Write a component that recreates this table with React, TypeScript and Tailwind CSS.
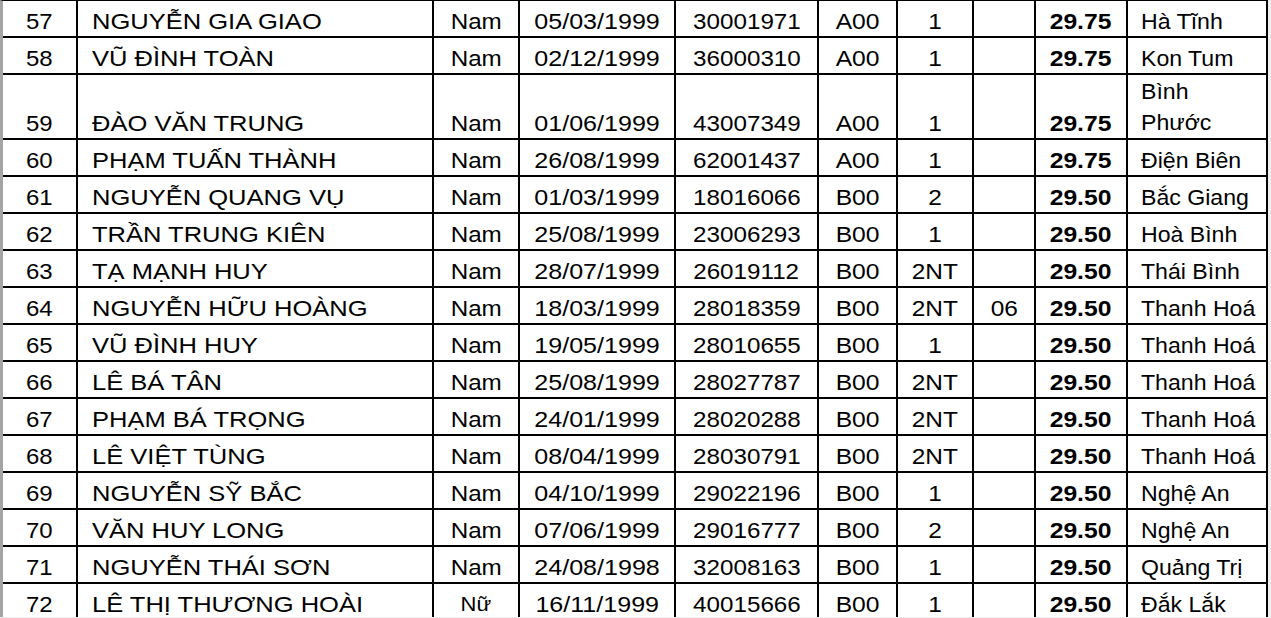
import React from "react";

type Row = {
  stt: string;
  name: string;
  gender: string;
  dob: string;
  sbd: string;
  khoi: string;
  kv: string;
  ut: string;
  score: string;
  place: string[];
};

const rows: Row[] = [
  { stt: "57", name: "NGUYỄN GIA GIAO", gender: "Nam", dob: "05/03/1999", sbd: "30001971", khoi: "A00", kv: "1", ut: "", score: "29.75", place: ["Hà Tĩnh"] },
  { stt: "58", name: "VŨ ĐÌNH TOÀN", gender: "Nam", dob: "02/12/1999", sbd: "36000310", khoi: "A00", kv: "1", ut: "", score: "29.75", place: ["Kon Tum"] },
  { stt: "59", name: "ĐÀO VĂN TRUNG", gender: "Nam", dob: "01/06/1999", sbd: "43007349", khoi: "A00", kv: "1", ut: "", score: "29.75", place: ["Bình", "Phước"] },
  { stt: "60", name: "PHẠM TUẤN THÀNH", gender: "Nam", dob: "26/08/1999", sbd: "62001437", khoi: "A00", kv: "1", ut: "", score: "29.75", place: ["Điện Biên"] },
  { stt: "61", name: "NGUYỄN QUANG VỤ", gender: "Nam", dob: "01/03/1999", sbd: "18016066", khoi: "B00", kv: "2", ut: "", score: "29.50", place: ["Bắc Giang"] },
  { stt: "62", name: "TRẦN TRUNG KIÊN", gender: "Nam", dob: "25/08/1999", sbd: "23006293", khoi: "B00", kv: "1", ut: "", score: "29.50", place: ["Hoà Bình"] },
  { stt: "63", name: "TẠ MẠNH HUY", gender: "Nam", dob: "28/07/1999", sbd: "26019112", khoi: "B00", kv: "2NT", ut: "", score: "29.50", place: ["Thái Bình"] },
  { stt: "64", name: "NGUYỄN HỮU HOÀNG", gender: "Nam", dob: "18/03/1999", sbd: "28018359", khoi: "B00", kv: "2NT", ut: "06", score: "29.50", place: ["Thanh Hoá"] },
  { stt: "65", name: "VŨ ĐÌNH HUY", gender: "Nam", dob: "19/05/1999", sbd: "28010655", khoi: "B00", kv: "1", ut: "", score: "29.50", place: ["Thanh Hoá"] },
  { stt: "66", name: "LÊ BÁ TÂN", gender: "Nam", dob: "25/08/1999", sbd: "28027787", khoi: "B00", kv: "2NT", ut: "", score: "29.50", place: ["Thanh Hoá"] },
  { stt: "67", name: "PHẠM BÁ TRỌNG", gender: "Nam", dob: "24/01/1999", sbd: "28020288", khoi: "B00", kv: "2NT", ut: "", score: "29.50", place: ["Thanh Hoá"] },
  { stt: "68", name: "LÊ VIỆT TÙNG", gender: "Nam", dob: "08/04/1999", sbd: "28030791", khoi: "B00", kv: "2NT", ut: "", score: "29.50", place: ["Thanh Hoá"] },
  { stt: "69", name: "NGUYỄN SỸ BẮC", gender: "Nam", dob: "04/10/1999", sbd: "29022196", khoi: "B00", kv: "1", ut: "", score: "29.50", place: ["Nghệ An"] },
  { stt: "70", name: "VĂN HUY LONG", gender: "Nam", dob: "07/06/1999", sbd: "29016777", khoi: "B00", kv: "2", ut: "", score: "29.50", place: ["Nghệ An"] },
  { stt: "71", name: "NGUYỄN THÁI SƠN", gender: "Nam", dob: "24/08/1998", sbd: "32008163", khoi: "B00", kv: "1", ut: "", score: "29.50", place: ["Quảng Trị"] },
  { stt: "72", name: "LÊ THỊ THƯƠNG HOÀI", gender: "Nữ", dob: "16/11/1999", sbd: "40015666", khoi: "B00", kv: "1", ut: "", score: "29.50", place: ["Đắk Lắk"] },
];

const cellBase = "flex items-end pb-[2px] border-r-2 border-black shrink-0";
const span = "inline-block whitespace-nowrap";

export default function App() {
  return (
    <div className="w-full h-[618px] bg-[#efefef] font-['Liberation_Sans',Arial,sans-serif] text-[22px] leading-[25px] text-black">
      <div className="flex flex-col w-[1268px] h-[617px] overflow-hidden bg-white border-t border-black border-l-[3px] border-l-[#a4a4a4]">
        {rows.map((r) => {
          const tall = r.place.length > 1;
          return (
            <div key={r.stt} className={`flex shrink-0 border-b-2 border-black ${tall ? "h-[65px]" : "h-[37px]"}`}>
              <div className={`${cellBase} w-[75px] justify-center`}>
                <span className={`${span} scale-x-[1.09]`}>{r.stt}</span>
              </div>
              <div className={`${cellBase} w-[356px] pl-[14px]`}>
                <span className={`${span} origin-left scale-x-[1.16]`}>{r.name}</span>
              </div>
              <div className={`${cellBase} w-[86px] justify-center`}>
                {r.gender === "Nữ" ? (
                  <span className={`${span} scale-x-[1.1] text-[20px]`}>{r.gender}</span>
                ) : (
                  <span className={`${span} scale-x-[1.1]`}>{r.gender}</span>
                )}
              </div>
              <div className={`${cellBase} w-[156px] justify-center`}>
                <span className={`${span} scale-x-[1.14]`}>{r.dob}</span>
              </div>
              <div className={`${cellBase} w-[143px] justify-center`}>
                <span className={`${span} scale-x-[1.1]`}>{r.sbd}</span>
              </div>
              <div className={`${cellBase} w-[79px] justify-center`}>
                <span className={`${span} scale-x-[1.12]`}>{r.khoi}</span>
              </div>
              <div className={`${cellBase} w-[76px] justify-center`}>
                <span className={`${span} scale-x-[1.11]`}>{r.kv}</span>
              </div>
              <div className={`${cellBase} w-[62px] justify-center`}>
                <span className={`${span} scale-x-[1.11]`}>{r.ut}</span>
              </div>
              <div className={`${cellBase} w-[92px] justify-center font-bold`}>
                <span className={`${span} scale-x-[1.12]`}>{r.score}</span>
              </div>
              {tall ? (
                <div className="flex flex-col justify-end border-r-2 border-black shrink-0 w-[140px] pl-[13px] leading-[31px]">
                  {r.place.map((p) => (
                    <div key={p}>
                      <span className={`${span} origin-left scale-x-[1.05]`}>{p}</span>
                    </div>
                  ))}
                </div>
              ) : (
                <div className={`${cellBase} w-[140px] pl-[13px]`}>
                  <span className={`${span} origin-left scale-x-[1.05]`}>{r.place[0]}</span>
                </div>
              )}
            </div>
          );
        })}
      </div>
    </div>
  );
}
